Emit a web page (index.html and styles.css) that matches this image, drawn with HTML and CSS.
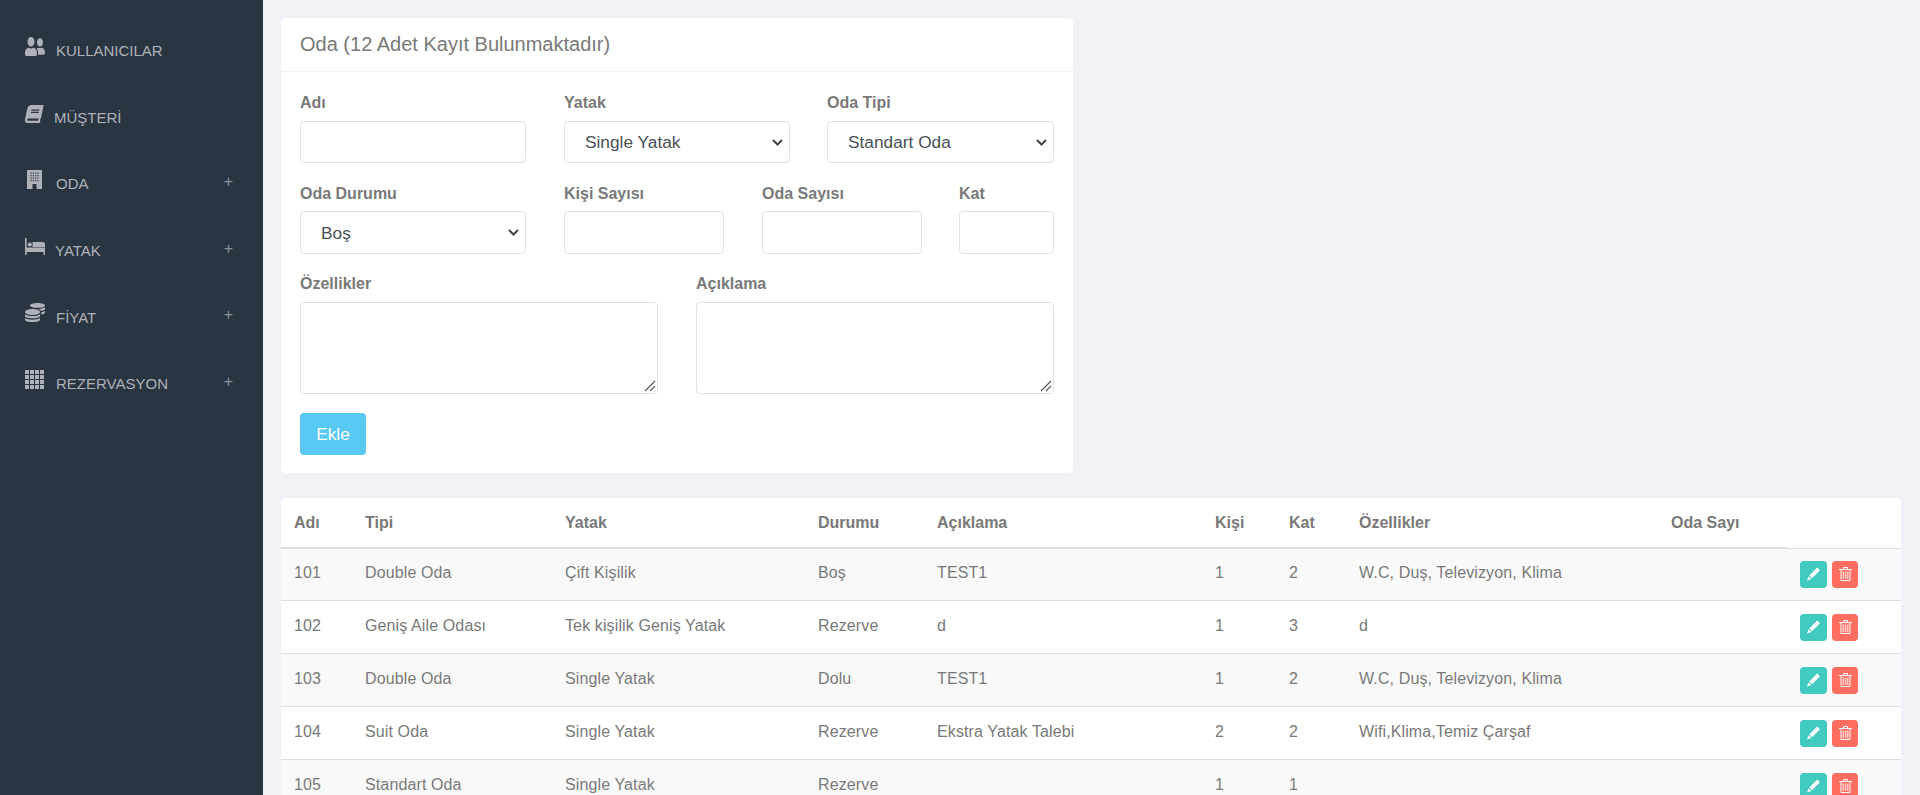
FILE: index.html
```html
<!DOCTYPE html>
<html lang="tr">
<head>
<meta charset="utf-8">
<title>Oda</title>
<link rel="stylesheet" href="styles.css">
</head>
<body>
<svg class="defs" aria-hidden="true">
  <symbol id="i-pencil" viewBox="0 0 14 14"><path fill="#fff" d="M11 0l3 3-8.500 8.500-3-3zM1.800 9.300l3 3L0 14z"/></symbol>
  <symbol id="i-trash" viewBox="0 0 13 14"><path fill="none" stroke="#fff" d="M4.500 2V.5h4V2M0 2.500h13M2 3v10.500h9V3"/><path fill="#fff" fill-opacity=".65" d="M3.500 4.500h1.500V12H3.500zM5.800 4.500h1.500V12H5.800zM8 4.500h1.500V12H8z"/></symbol>
</svg>
<aside class="sidebar">
  <ul class="nav">
    <li class="nav-item"><svg class="ico ico-users" viewBox="0 32 640 448" preserveAspectRatio="none"><path d="M192 256c61.900 0 112-50.100 112-112S253.900 32 192 32 80 82.100 80 144s50.100 112 112 112zm76.800 32h-8.300c-20.800 10-43.900 16-68.500 16s-47.600-6-68.500-16h-8.300C51.600 288 0 339.600 0 403.200V432c0 26.500 21.500 48 48 48h288c26.500 0 48-21.500 48-48v-28.800c0-63.600-51.600-115.200-115.200-115.200zM480 256c53 0 96-43 96-96s-43-96-96-96-96 43-96 96 43 96 96 96zm48 32h-3.800c-13.900 4.800-28.600 8-44.200 8s-30.300-3.200-44.200-8H432c-20.400 0-39.200 5.900-55.700 15.400 24.400 26.300 39.700 61.200 39.700 99.800v38.400c0 2.200-.5 4.300-.6 6.400H592c26.500 0 48-21.500 48-48 0-61.900-50.100-112-112-112z"/></svg><span class="nav-label nav-label-up">KULLANICILAR</span></li>
    <li class="nav-item"><svg class="ico ico-book" viewBox="0 0 448 512"><path d="M448 360V24c0-13.300-10.700-24-24-24H96C43 0 0 43 0 96v320c0 53 43 96 96 96h328c13.300 0 24-10.700 24-24v-16c0-7.500-3.500-14.300-8.900-18.700-4.200-15.400-4.200-59.300 0-74.700 5.400-4.300 8.900-11.100 8.900-18.600zM128 134c0-3.300 2.700-6 6-6h212c3.300 0 6 2.700 6 6v20c0 3.300-2.700 6-6 6H134c-3.300 0-6-2.700-6-6v-20zm0 64c0-3.300 2.700-6 6-6h212c3.300 0 6 2.700 6 6v20c0 3.300-2.700 6-6 6H134c-3.300 0-6-2.700-6-6v-20zm253.400 250H96c-17.700 0-32-14.300-32-32 0-17.600 14.400-32 32-32h285.400c-1.900 17.100-1.900 46.900 0 64z"/></svg><span class="nav-label">MÜŞTERİ</span></li>
    <li class="nav-item"><svg class="ico ico-building" viewBox="0 0 15 19"><path fill-rule="evenodd" d="M1 0h13a1 1 0 0 1 1 1v18H9.500v-5h-4v5H0V1a1 1 0 0 1 1-1zM3.500 2.500v1.200h1.200V2.500zm2.300 0v1.200H7V2.500zm2.300 0v1.200h1.200V2.500zm2.300 0v1.200h1.200V2.500zM3.500 5v1.200h1.200V5zm2.300 0v1.200H7V5zm2.300 0v1.200h1.200V5zm2.300 0v1.200h1.200V5zM3.500 7.500v1.200h1.200V7.500zm2.300 0v1.200H7V7.500zm2.300 0v1.200h1.200V7.500zm2.300 0v1.200h1.200V7.500zM3.500 10v1.200h1.200V10zm2.300 0v1.200H7V10zm2.300 0v1.200h1.200V10zm2.300 0v1.200h1.200V10z"/></svg><span class="nav-label">ODA</span><span class="plus">+</span></li>
    <li class="nav-item"><svg class="ico ico-bed" viewBox="0 0 20 17"><path d="M0 0h1.600v17H0zM7.500 4h10A2.500 2.500 0 0 1 20 6.500V9H7.500zM1.600 9.500H20V17h-1.500v-3H1.600z"/><circle cx="4.800" cy="6.500" r="2.100"/></svg><span class="nav-label nav-label-bed">YATAK</span><span class="plus">+</span></li>
    <li class="nav-item"><svg class="ico ico-coins" viewBox="0 0 512 512" preserveAspectRatio="none"><path d="M0 405.300V448c0 35.300 86 64 192 64s192-28.700 192-64v-42.700C342.700 434.400 267.200 448 192 448S41.300 434.400 0 405.300zM320 128c106 0 192-28.700 192-64S426 0 320 0 128 28.700 128 64s86 64 192 64zM0 300.400V352c0 35.300 86 64 192 64s192-28.700 192-64v-51.600c-41.300 34-116.900 51.600-192 51.600S41.300 334.400 0 300.400zm416 11c57.300-11.100 96-31.700 96-55.400v-42.700c-23.200 16.400-57.300 27.600-96 34.500v63.600zM192 160C86 160 0 195.800 0 240s86 80 192 80 192-35.800 192-80-86-80-192-80zm219.300 56.300c60-10.800 100.700-32 100.700-56.300v-42.700c-35.500 25.100-96.500 38.600-160.700 41.800 29.500 14.300 51.200 33.500 60 57.200z"/></svg><span class="nav-label nav-label-down">FİYAT</span><span class="plus">+</span></li>
    <li class="nav-item"><svg class="ico ico-grid" viewBox="0 0 19 19"><path d="M0 0h4v4H0zM5 0h4v4H5zM10 0h4v4h-4zM15 0h4v4h-4zM0 5h4v4H0zM5 5h4v4H5zM10 5h4v4h-4zM15 5h4v4h-4zM0 10h4v4H0zM5 10h4v4H5zM10 10h4v4h-4zM15 10h4v4h-4zM0 15h4v4H0zM5 15h4v4H5zM10 15h4v4h-4zM15 15h4v4h-4z"/></svg><span class="nav-label">REZERVASYON</span><span class="plus">+</span></li>
  </ul>
</aside>
<main class="content">
  <section class="card form-card">
    <header class="card-head">Oda (12 Adet Kayıt Bulunmaktadır)</header>
    <form class="form-body">
      <div class="grid grid-a">
        <div class="field f-226"><label>Adı</label><input type="text" class="ctl h42"></div>
        <div class="field f-226"><label>Yatak</label><select class="ctl sel h42"><option>Single Yatak</option></select></div>
        <div class="field"><label>Oda Tipi</label><select class="ctl sel h42"><option>Standart Oda</option></select></div>
      </div>
      <div class="grid grid-b">
        <div class="field f-226"><label>Oda Durumu</label><select class="ctl sel h43"><option>Boş</option></select></div>
        <div class="field f-160"><label>Kişi Sayısı</label><input type="text" class="ctl h43"></div>
        <div class="field f-160"><label>Oda Sayısı</label><input type="text" class="ctl h43"></div>
        <div class="field"><label>Kat</label><input type="text" class="ctl h43"></div>
      </div>
      <div class="grid grid-c">
        <div class="field f-358"><label>Özellikler</label><textarea class="ctl area"></textarea></div>
        <div class="field"><label>Açıklama</label><textarea class="ctl area"></textarea></div>
      </div>
      <button type="button" class="btn-add">Ekle</button>
    </form>
  </section>
  <section class="card table-card">
    <table class="rooms">
      <colgroup><col class="c1"><col class="c2"><col class="c3"><col class="c4"><col class="c5"><col class="c6"><col class="c7"><col class="c8"><col class="c9"><col class="c10"></colgroup>
      <thead>
        <tr><th>Adı</th><th>Tipi</th><th>Yatak</th><th>Durumu</th><th>Açıklama</th><th>Kişi</th><th>Kat</th><th>Özellikler</th><th>Oda Sayı</th><td class="blank"></td></tr>
      </thead>
      <tbody>
        <tr><td>101</td><td>Double Oda</td><td>Çift Kişilik</td><td>Boş</td><td>TEST1</td><td>1</td><td>2</td><td>W.C, Duş, Televizyon, Klima</td><td></td><td class="acts"><button type="button" class="act act-edit"><svg class="act-ico"><use href="#i-pencil"/></svg></button><button type="button" class="act act-del"><svg class="act-ico"><use href="#i-trash"/></svg></button></td></tr>
        <tr><td>102</td><td>Geniş Aile Odası</td><td>Tek kişilik Geniş Yatak</td><td>Rezerve</td><td>d</td><td>1</td><td>3</td><td>d</td><td></td><td class="acts"><button type="button" class="act act-edit"><svg class="act-ico"><use href="#i-pencil"/></svg></button><button type="button" class="act act-del"><svg class="act-ico"><use href="#i-trash"/></svg></button></td></tr>
        <tr><td>103</td><td>Double Oda</td><td>Single Yatak</td><td>Dolu</td><td>TEST1</td><td>1</td><td>2</td><td>W.C, Duş, Televizyon, Klima</td><td></td><td class="acts"><button type="button" class="act act-edit"><svg class="act-ico"><use href="#i-pencil"/></svg></button><button type="button" class="act act-del"><svg class="act-ico"><use href="#i-trash"/></svg></button></td></tr>
        <tr><td>104</td><td>Suit Oda</td><td>Single Yatak</td><td>Rezerve</td><td>Ekstra Yatak Talebi</td><td>2</td><td>2</td><td>Wifi,Klima,Temiz Çarşaf</td><td></td><td class="acts"><button type="button" class="act act-edit"><svg class="act-ico"><use href="#i-pencil"/></svg></button><button type="button" class="act act-del"><svg class="act-ico"><use href="#i-trash"/></svg></button></td></tr>
        <tr><td>105</td><td>Standart Oda</td><td>Single Yatak</td><td>Rezerve</td><td></td><td>1</td><td>1</td><td></td><td></td><td class="acts"><button type="button" class="act act-edit"><svg class="act-ico"><use href="#i-pencil"/></svg></button><button type="button" class="act act-del"><svg class="act-ico"><use href="#i-trash"/></svg></button></td></tr>
      </tbody>
    </table>
  </section>
</main>
</body>
</html>
```
FILE: styles.css
```css
* { box-sizing: border-box; }
html, body { height: 100%; }
body {
  margin: 0;
  display: flex;
  overflow: hidden;
  background: #f1f2f7;
  color: #797979;
  font: 16px/24px "Liberation Sans", Arial, sans-serif;
}
.defs { display: none; }

/* sidebar */
.sidebar { flex: 0 0 263px; background: #2a3542; }
.nav { list-style: none; margin: 0; padding: 17px 0 0 25px; }
.nav-item { display: flex; align-items: center; height: 66.4px; color: #aeb2b7; font-size: 15px; }
.ico { flex: none; fill: #aeb2b7; margin-top: -6px; }
.ico-users { width: 20px; height: 19px; margin-top: -8px; }
.ico-book { width: 18px; height: 18px; transform: skewX(-12deg); }
.ico-building { width: 15px; height: 19px; margin-left: 2px; margin-right: 3px; }
.ico-bed { width: 20px; height: 17px; }
.ico-coins { width: 20px; height: 19px; }
.ico-grid { width: 19px; height: 19px; margin-right: 1px; }
.nav-label { margin-left: 11px; margin-top: 3px; }
.nav-label-up { margin-top: 1px; }
.nav-label-down { margin-top: 5px; }
.nav-label-bed { margin-left: 10px; }
.plus { margin-left: auto; margin-right: 30px; margin-top: -1px; font-size: 16px; color: #8a9098; }

/* main column */
.content { flex: 1; min-width: 0; padding: 18px 19px 0 18px; display: flex; flex-direction: column; gap: 25px; }
.card { background: #fff; border-radius: 5px; flex: none; }
.form-card { width: 792px; }
.card-head { height: 54px; padding: 14px 19px 0; font-size: 20px; border-bottom: 1px solid #eff2f7; }
.form-body { padding: 19px 19px 18px; }

/* form */
.grid { display: grid; }
.grid-a { grid-template-columns: 264px 263px 227px; margin-bottom: 19px; }
.grid-b { grid-template-columns: 264px 198px 197px 95px; margin-bottom: 18px; }
.grid-c { grid-template-columns: 396px 358px; margin-bottom: 19px; }
.field label { display: block; font-weight: 700; margin-bottom: 6px; }
.grid-b .field label { margin-bottom: 5px; }
.f-226 { width: 226px; }
.f-160 { width: 160px; }
.f-358 { width: 358px; }
.ctl {
  display: block;
  width: 100%;
  margin: 0;
  padding: 6px 16px;
  background: #fff;
  border: 1px solid #e2e2e4;
  border-radius: 4px;
  color: #495057;
  font: 17.3px/24px "Liberation Sans", Arial, sans-serif;
}
.sel {
  appearance: none;
  padding-left: 20px;
  background: #fff url("data:image/svg+xml,%3Csvg xmlns='http://www.w3.org/2000/svg' width='11' height='7'%3E%3Cpath d='M1 1l4.500 4.500L10 1' fill='none' stroke='%23444' stroke-width='2'/%3E%3C/svg%3E") no-repeat right 6px center;
}
.h42 { height: 42px; }
.h43 { height: 43px; }
.area { height: 92px; }
.area::-webkit-resizer {
  background: url("data:image/svg+xml,%3Csvg xmlns='http://www.w3.org/2000/svg' width='15' height='15'%3E%3Cpath d='M13 3L3 13M13 8l-5 5' fill='none' stroke='%23555' stroke-width='1.100'/%3E%3C/svg%3E") no-repeat center;
}
.btn-add {
  display: block;
  width: 66px;
  height: 42px;
  padding: 0;
  border: 0;
  border-radius: 4px;
  background: #58c9f3;
  color: #fff;
  font: 17.3px/24px "Liberation Sans", Arial, sans-serif;
}

/* table */
.table-card { overflow: hidden; }
.rooms { width: 100%; table-layout: fixed; border-collapse: collapse; }
.c1 { width: 72px; }
.c2 { width: 200px; }
.c3 { width: 253px; }
.c4 { width: 119px; }
.c5 { width: 278px; }
.c6 { width: 74px; }
.c7 { width: 70px; }
.c8 { width: 312px; }
.c9 { width: 129px; }
.c10 { width: 113px; }
.rooms th, .rooms td { padding: 12px; text-align: left; vertical-align: top; white-space: nowrap; }
.rooms th:first-child, .rooms td:first-child { padding-left: 13px; }
.rooms th { height: 50px; padding-top: 13px; padding-bottom: 11px; font-weight: 700; border-bottom: 2px solid #ddd; }
.rooms .blank { border-bottom: 1px solid #ddd; }
.rooms tbody td { height: 53px; padding-top: 13px; padding-bottom: 11px; border-top: 1px solid #ddd; letter-spacing: .12px; }
.rooms tbody tr:first-child td { height: 52px; padding-top: 12px; padding-bottom: 12px; border-top: 0; }
.rooms tbody tr:nth-child(odd) { background: #f9f9f9; }
.rooms .acts, .rooms tbody tr:first-child .acts { padding-bottom: 0; line-height: 0; }
.act {
  display: inline-flex;
  align-items: center;
  justify-content: center;
  height: 27px;
  padding: 0;
  border: 0;
  border-radius: 4px;
  vertical-align: top;
}
.act-edit { width: 27px; background: #41cac0; }
.act-del { width: 26px; margin-left: 5px; background: #ff6c60; }
.act-ico { width: 13px; height: 14px; display: block; }
```
